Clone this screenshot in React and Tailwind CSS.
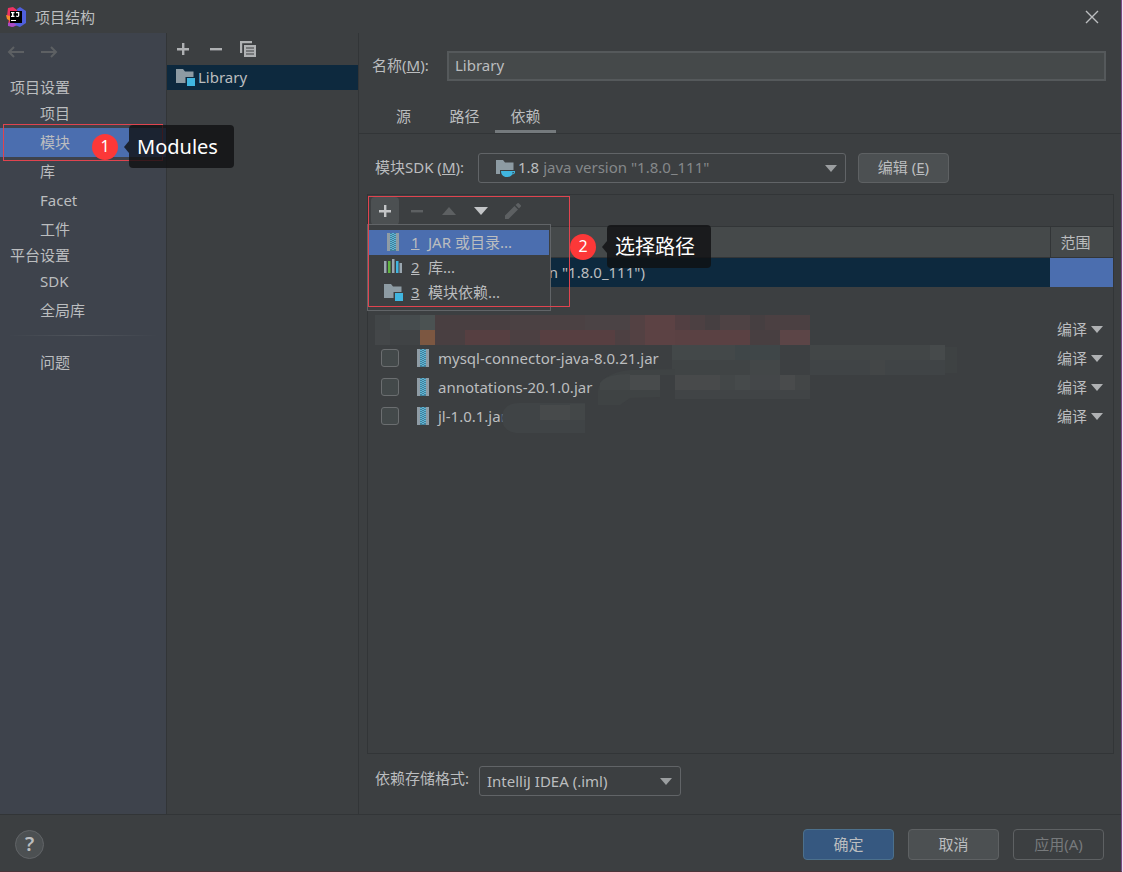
import React from 'react';

const sideItem = 'flex h-[29px] w-full items-center pb-0.5 pl-10 text-left';
const sideHeading = 'flex h-[23px] items-center pb-0.5 pl-[10px]';

function Caret({ className = '' }) {
  return (
    <svg viewBox="0 0 12 7" className={'pointer-events-none h-[7px] w-3 shrink-0 ' + className} fill="currentColor" aria-hidden="true">
      <path d="M0 0h12L6 7z" />
    </svg>
  );
}

function Plus() {
  return (
    <svg viewBox="0 0 14 14" className="size-[14px]" fill="currentColor" aria-hidden="true">
      <path d="M6 1h2.4v5H13v2.4H8.4V13H6V8.4H1V6h5z" />
    </svg>
  );
}

function Minus() {
  return (
    <svg viewBox="0 0 14 14" className="size-[14px]" fill="currentColor" aria-hidden="true">
      <path d="M1 6h12v2.4H1z" />
    </svg>
  );
}

function ModuleIcon() {
  return (
    <svg viewBox="0 0 20 18" className="h-[18px] w-5 shrink-0" aria-hidden="true">
      <path d="M1 1h7l2 2.500h8.500V9h-8v6H1z" fill="#8d9ba3" />
      <rect x="12" y="10" width="8" height="8" fill="#40b6e0" />
    </svg>
  );
}

function JdkIcon() {
  return (
    <svg viewBox="0 0 20 18" className="h-[18px] w-5 shrink-0" aria-hidden="true">
      <path d="M1 1h7l2 2.500h8.500V11H5v4H1z" fill="#8d9ba3" />
      <path d="M6 12h14v1.200c0 1.400-1.100 2.200-2.800 2.200-1 1.700-2.500 2.600-4.600 2.600h-1C8.200 18 6 15.500 6 12z" fill="#40b6e0" />
      <path d="M17.500 13h1.400c0 .9-.4 1.400-1.400 1.600z" fill="#3c3f41" />
    </svg>
  );
}

function JarIcon() {
  return (
    <svg viewBox="0 0 14 18" className="h-[18px] w-[14px] shrink-0" aria-hidden="true">
      <path d="M1 0h3v18H1zM10 0h3v18h-3z" fill="#8f9ca5" />
      <path d="M4 0h6v18H4z" fill="#43809a" />
      <path d="M4 1h2v1H4zM6 2h2v1H6zM8 3h2v1H8zM4 5h2v1H4zM6 6h2v1H6zM8 7h2v1H8zM4 9h2v1H4zM6 10h2v1H6zM8 11h2v1H8zM4 13h2v1H4zM6 14h2v1H6zM8 15h2v1H8zM6 0h2v1H6zM8 1h2v1H8zM4 3h2v1H4zM6 4h2v1H6zM8 5h2v1H8zM4 7h2v1H4zM6 8h2v1H6zM8 9h2v1H8zM4 11h2v1H4zM6 12h2v1H6zM8 13h2v1H8zM4 15h2v1H4zM6 16h2v1H6z" fill="#5fb6d6" />
    </svg>
  );
}

function LibraryIcon() {
  return (
    <svg viewBox="0 0 18 16" className="h-4 w-[18px] shrink-0" aria-hidden="true">
      <path d="M0 2h2.500v12H0z" fill="#9aa7b0" />
      <path d="M4 2h2.500v12H4z" fill="#62b543" />
      <path d="M8 0h2.500v14H8z" fill="#9aa7b0" />
      <path d="M12 2h2.500v12H12z" fill="#40b6e0" />
      <path d="M15.500 4H18v10h-2.500z" fill="#9aa7b0" />
    </svg>
  );
}

function Logo() {
  return (
    <svg viewBox="0 0 20 20" className="size-5" aria-hidden="true">
      <path d="M2 1l5-1 4 3v8l-5 9-4-2 1-6-2-3z" fill="#ee3362" />
      <path d="M0 8l4 1v5l-3-2z" fill="#f98c2b" />
      <path d="M11 2l3-2 6 4v12l-6 4-8-3 6-6z" fill="#4f5fdc" />
      <path d="M2 16l4-1 5 3-4 2-5-1z" fill="#a84bc8" />
      <rect x="4" y="4" width="12" height="12" fill="#000" />
      <path d="M5 5h3.500v1.200h-1v2.600h1V10H5V8.800h1V6.200H5zM10 5h3.300v3.300c0 1.200-.7 1.800-1.800 1.800-.8 0-1.400-.3-1.800-.8l.8-.9c.3.300.5.5.9.5s.6-.2.600-.7v-2h-2zM5 13h5v1H5z" fill="#fff" />
    </svg>
  );
}

function Step({ n, label, className }) {
  return (
    <div className={'pointer-events-none absolute z-30 flex items-center ' + className}>
      <span className="flex size-[26px] items-center justify-center rounded-full bg-[#fc3838] pb-0.5 text-[16px] text-white">{n}</span>
      <svg viewBox="0 0 5 12" className="ml-[6px] h-3 w-[5px]" aria-hidden="true">
        <path d="M5 0v12L0 6z" fill="#0f1012" fillOpacity="0.8" />
      </svg>
      <span className="flex h-[43px] items-center rounded-sm bg-[#0f1012]/80 pr-4 pl-2 text-[20px] whitespace-nowrap text-white">{label}</span>
    </div>
  );
}

const mosaic = [
  [375, 315, 15, 15, '#424648'], [390, 315, 30, 15, '#464c4e'], [375, 330, 15, 15, '#444749'], [390, 330, 30, 15, '#404345'],
  [420, 315, 15, 15, '#4b5252'], [420, 330, 15, 15, '#7c5741'],
  [435, 315, 75, 15, '#493f41'], [510, 315, 75, 15, '#4b4143'], [585, 315, 45, 15, '#4b4345'], [435, 330, 30, 15, '#493f41'],
  [465, 330, 45, 15, '#563f41'], [510, 330, 30, 15, '#4c4042'], [540, 330, 75, 15, '#573f41'], [615, 330, 15, 15, '#4d4042'],
  [630, 315, 15, 30, '#534143'], [645, 315, 30, 30, '#5c4244'], [675, 315, 15, 15, '#523f42'], [690, 315, 15, 15, '#4c4042'],
  [705, 315, 15, 15, '#463f41'], [720, 315, 30, 15, '#4e4244'], [750, 315, 15, 15, '#463f41'], [765, 315, 45, 15, '#4b4042'],
  [675, 330, 75, 15, '#5a4143'], [750, 330, 30, 15, '#483f41'], [780, 330, 30, 15, '#5c4547'],
  [672, 345, 63, 15, '#434849'], [735, 345, 45, 15, '#3f4648'], [672, 360, 78, 15, '#404445'], [750, 360, 30, 15, '#434748'],
  [780, 345, 30, 30, '#3d4042'], [810, 345, 135, 15, '#424647'], [810, 360, 135, 15, '#404446'], [870, 360, 15, 15, '#434647'],
  [930, 345, 15, 15, '#464a4b'], [945, 347, 12, 26, '#3e4243'],
  [675, 375, 45, 15, '#484a4b'], [720, 375, 15, 15, '#434748'], [735, 375, 15, 15, '#464a4b'], [750, 375, 30, 15, '#444749'],
  [780, 375, 15, 15, '#494b4c'], [795, 375, 15, 15, '#434647'], [675, 390, 135, 9, '#414446'],
];

function Mosaic() {
  return (
    <svg viewBox="375 315 585 120" className="pointer-events-none absolute top-[120px] left-[7px] h-[120px] w-[585px]" aria-hidden="true">
      {mosaic.map(([x, y, w, h, c], i) => (
        <rect key={i} x={x} y={y} width={w} height={h} fill={c} />
      ))}
      <path d="M598 392c0-12 12-20 32-22l45-1v6h-15v22l-30 1-10 7h-22z" fill="#3f4344" />
      <path d="M600 383c4-6 14-9 30-9v16h-30z" fill="#434748" />
      <path d="M630 375h30v15h-30z" fill="#484b4c" />
      <path d="M502 418c0-10 7-15 17-15h66v30h-66c-10 0-17-5-17-15z" fill="#404446" />
      <path d="M540 405h30v15h-30z" fill="#474a4b" />
      <path d="M570 404h15v16h-15z" fill="#434748" />
    </svg>
  );
}

function Dependency({ name, label }) {
  return (
    <tr className="h-[29px]">
      <td className="p-0">
        {name && (
          <label className="flex items-center pb-0.5 pl-[13px]">
            <input type="checkbox" className="size-[18px] appearance-none rounded-[3px] border border-[#6b6e70] bg-[#43494a]" />
            <span className="flex items-center gap-2 pl-[17px]">
              <JarIcon />
              {name}
            </span>
          </label>
        )}
      </td>
      <td className="p-0">
        <div className="flex items-center pb-0.5 pl-[7px]">
          <select aria-label={label || '范围 ' + name} className="w-[46px] appearance-none bg-transparent outline-none">
            <option>编译</option>
          </select>
          <Caret className="-ml-3 text-[#afb1b3]" />
        </div>
      </td>
    </tr>
  );
}

const menu = [
  { n: 1, label: 'JAR 或目录...', icon: <JarIcon />, active: true },
  { n: 2, label: '库...', icon: <LibraryIcon /> },
  { n: 3, label: '模块依赖...', icon: <ModuleIcon /> },
];

export default function App() {
  return (
    <div className="flex min-h-screen border-r border-[#f3e6f5] bg-[#3c3f41] font-['Noto_Sans','Noto_Sans_CJK_SC',sans-serif] text-[15px] leading-5 text-[#bbbdbf]">
      <div className="flex min-w-0 flex-1 flex-col border-r border-b border-r-[#7d4a86] border-b-[#4a3439]">
        <header className="flex h-[33px] items-center justify-between pr-[22px] pl-[6px]">
          <div className="flex items-center gap-[9px]">
            <Logo />
            <h1>项目结构</h1>
          </div>
          <button aria-label="关闭">
            <svg viewBox="0 0 14 14" className="size-[14px]" stroke="#bcbec0" strokeWidth="1.4" aria-hidden="true">
              <path d="M1 1l12 12M13 1L1 13" />
            </svg>
          </button>
        </header>

        <div className="flex flex-1">
          <nav className="w-[167px] shrink-0 border-r border-[#323537] bg-[#3e434c]">
            <div className="mb-[5px] flex h-[38px] items-center gap-[15px] pl-[7px] text-[#5d6063]">
              <button aria-label="后退">
                <svg viewBox="0 0 18 14" className="h-[14px] w-[18px]" fill="none" stroke="currentColor" strokeWidth="2" aria-hidden="true">
                  <path d="M17 7H2M7 2L2 7l5 5" />
                </svg>
              </button>
              <button aria-label="前进">
                <svg viewBox="0 0 18 14" className="h-[14px] w-[18px]" fill="none" stroke="currentColor" strokeWidth="2" aria-hidden="true">
                  <path d="M1 7h15M11 2l5 5-5 5" />
                </svg>
              </button>
            </div>
            <h2 className={sideHeading}>项目设置</h2>
            <button className={sideItem}>项目</button>
            <div className="relative">
              <button className={sideItem + ' bg-[#4b6eaf]'}>模块</button>
              <div className="pointer-events-none absolute -inset-y-1 right-[3px] left-[3px] border border-[#e0444f]" />
              <Step n={1} label="Modules" className="-top-[3px] left-[92px]" />
            </div>
            <button className={sideItem}>库</button>
            <button className={sideItem}>Facet</button>
            <button className={sideItem}>工件</button>
            <h2 className={sideHeading}>平台设置</h2>
            <button className={sideItem}>SDK</button>
            <button className={sideItem}>全局库</button>
            <div className="mx-2 mt-[10px] mb-3 h-px bg-linear-to-r from-transparent via-[#50555c] to-transparent" />
            <button className={sideItem}>问题</button>
          </nav>

          <section className="w-[192px] shrink-0 border-r border-[#323537]">
            <div className="flex h-8 items-center gap-[19px] pl-[9px] text-[#afb1b3]">
              <button aria-label="添加"><Plus /></button>
              <button aria-label="移除"><Minus /></button>
              <button aria-label="复制">
                <svg viewBox="0 0 16 16" className="-ml-0.5 size-4" aria-hidden="true">
                  <path d="M0 0h12v2.200H2.200V12H0z" fill="currentColor" />
                  <path d="M4 4h12v12H4z" fill="currentColor" />
                  <path d="M6 7h8M6 10h8M6 13h8" stroke="#3c3f41" strokeWidth="1.200" />
                </svg>
              </button>
            </div>
            <button className="flex h-[25px] w-full items-center gap-[3px] bg-[#0d293e] pb-0.5 pl-2">
              <ModuleIcon />
              Library
            </button>
          </section>

          <main className="flex min-w-0 flex-1 flex-col">
            <div className="mt-[18px] flex items-center pr-[15px] pl-[13px]">
              <label htmlFor="name" className="w-[75px] pb-0.5">名称(<u>M</u>):</label>
              <input id="name" defaultValue="Library" className="h-[30px] min-w-0 flex-1 border-2 border-[#55595b] bg-[#45494a] px-[6px] pb-0.5 outline-none" />
            </div>

            <div role="tablist" className="mt-[17px] flex border-b border-[#323537] pl-[14px]">
              <button role="tab" className="h-[35px] w-[61px]">源</button>
              <button role="tab" className="h-[35px] w-[61px]">路径</button>
              <button role="tab" aria-selected="true" className="h-[35px] w-[61px] border-b-[3px] border-[#757a7d] pt-[3px]">依赖</button>
            </div>

            <div className="mt-[19px] flex items-center pl-4">
              <label htmlFor="sdk" className="w-[103px] pb-0.5">模块SDK (<u>M</u>):</label>
              <div className="flex h-[30px] w-[368px] items-center rounded-[3px] border border-[#616467] pr-2 pl-4">
                <JdkIcon />
                <span className="pr-1 pb-0.5 pl-[3px]">1.8</span>
                <select id="sdk" className="min-w-0 flex-1 appearance-none bg-transparent pb-0.5 text-[#85888a] outline-none">
                  <option>java version "1.8.0_111"</option>
                </select>
                <Caret className="text-[#9b9ea0]" />
              </div>
              <button className="ml-3 h-[30px] w-[91px] rounded-[4px] border border-[#5e6163] bg-[#4c5052] pb-0.5">编辑 (<u>E</u>)</button>
            </div>

            <div className="relative mt-[11px] mr-[7px] ml-2 flex-1 border border-[#323537]">
              <div className="flex h-[31px] items-center gap-1 pl-[3px] text-[#5d6062]">
                <button aria-label="添加" aria-haspopup="menu" className="flex size-7 items-center justify-center rounded bg-[#4c5052] text-[#c3c5c7]"><Plus /></button>
                <button aria-label="移除" className="flex size-7 items-center justify-center"><Minus /></button>
                <button aria-label="上移" className="flex size-7 items-center justify-center">
                  <svg viewBox="0 0 14 8" className="h-2 w-[14px]" fill="currentColor" aria-hidden="true"><path d="M0 8h14L7 0z" /></svg>
                </button>
                <button aria-label="下移" className="flex size-7 items-center justify-center text-[#c3c5c7]">
                  <svg viewBox="0 0 14 8" className="h-2 w-[14px]" fill="currentColor" aria-hidden="true"><path d="M0 0h14L7 8z" /></svg>
                </button>
                <button aria-label="编辑" className="flex size-7 items-center justify-center">
                  <svg viewBox="0 0 16 16" className="size-4" fill="currentColor" aria-hidden="true">
                    <path d="M0 16v-3.500L9.500 3 13 6.500 3.500 16zM10.500 2l1.700-1.600a1.300 1.300 0 0 1 1.800 0l1.600 1.600a1.300 1.300 0 0 1 0 1.800L14 5.500z" />
                  </svg>
                </button>
              </div>

              <table className="w-full table-fixed border-collapse text-left">
                <thead>
                  <tr className="h-[31px] border-y border-[#323537] bg-[#45494a]">
                    <th className="p-0" aria-label="导出" />
                    <th className="w-[63px] border-l border-[#323537] p-0 pl-[10px] font-normal">范围</th>
                  </tr>
                </thead>
                <tbody>
                  <tr className="h-[29px]">
                    <td className="bg-[#0d293e] p-0 pl-[76px]">1.8 (java version "1.8.0_111")</td>
                    <td className="bg-[#4b6eaf] p-0" />
                  </tr>
                  <tr className="h-[29px]"><td /><td /></tr>
                  <Dependency label="范围" />
                  <Dependency name="mysql-connector-java-8.0.21.jar" />
                  <Dependency name="annotations-20.1.0.jar" />
                  <Dependency name="jl-1.0.1.jar" />
                </tbody>
              </table>
              <Mosaic />

              <div role="menu" className="absolute top-[29px] -left-px z-10 w-[184px] border border-[#616467] bg-[#3c3f41] px-px py-[5px]">
                {menu.map((m) => (
                  <button key={m.n} role="menuitem" className={'flex h-[25px] w-full items-center pb-0.5 ' + (m.active ? 'bg-[#4b6eaf]' : '')}>
                    <span className="flex w-[42px] items-center justify-center pl-[6px]">{m.icon}</span>
                    <u className="w-[17px] text-left">{m.n}</u>
                    {m.label}
                  </button>
                ))}
              </div>
              <div className="pointer-events-none absolute top-px left-0 z-20 h-[111px] w-[202px] border border-[#e0444f]" />
              <Step n={2} label="选择路径" className="top-[30px] left-[202px]" />
            </div>

            <div className="mt-3 mb-[18px] flex items-center pl-4">
              <label htmlFor="format" className="w-[104px] self-start leading-6">依赖存储格式:</label>
              <div className="flex h-[30px] w-[202px] items-center rounded-[3px] border border-[#616467] pr-2 pl-[7px]">
                <select id="format" className="min-w-0 flex-1 appearance-none bg-transparent outline-none">
                  <option>IntelliJ IDEA (.iml)</option>
                </select>
                <Caret className="text-[#9b9ea0]" />
              </div>
            </div>
          </main>
        </div>

        <footer className="flex h-[57px] items-center justify-between border-t border-[#323537] pt-0.5 pr-[17px] pl-[15px]">
          <button aria-label="帮助" className="flex size-[29px] items-center justify-center rounded-full border border-[#616467] bg-[#4c5052] text-[20px] font-semibold">?</button>
          <div className="flex gap-[14px]">
            <button className="h-[31px] w-[91px] rounded-[4px] border border-[#4c708c] bg-[#365880]">确定</button>
            <button className="h-[31px] w-[91px] rounded-[4px] border border-[#5e6163] bg-[#4c5052]">取消</button>
            <button disabled className="h-[31px] w-[91px] rounded-[4px] border border-[#5e6163] text-[#777a7c]">应用(A)</button>
          </div>
        </footer>
      </div>
    </div>
  );
}
